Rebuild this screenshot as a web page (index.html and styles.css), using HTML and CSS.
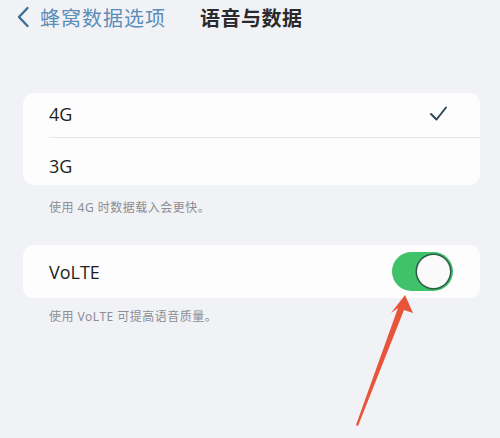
FILE: index.html
```html
<!DOCTYPE html>
<html lang="zh">
<head>
<meta charset="utf-8">
<link rel="stylesheet" href="styles.css">
</head>
<body>
<div class="screen">
  <header class="nav">
    <div class="back">
      <svg class="chev" width="14" height="22" viewBox="0 0 14 22"><path d="M11.5 2 L3 11 L11.5 20" fill="none" stroke="#3b6f96" stroke-width="2.4" stroke-linecap="round" stroke-linejoin="round"/></svg>
      <span class="back-label">蜂窝数据选项</span>
    </div>
    <h1 class="title">语音与数据</h1>
  </header>

  <section class="group first">
    <div class="card">
      <div class="row top">
        <span class="label">4G</span>
        <svg class="check" width="19" height="17" viewBox="0 0 19 17"><path d="M2 9 L7.5 14.5 L17 2.5" fill="none" stroke="#2d4b5c" stroke-width="2" stroke-linecap="round" stroke-linejoin="round"/></svg>
      </div>
      <div class="row sep">
        <span class="label">3G</span>
      </div>
    </div>
    <p class="note">使用 4G 时数据载入会更快。</p>
  </section>

  <section class="group">
    <div class="card">
      <div class="row tall">
        <span class="label">VoLTE</span>
        <div class="toggle"><div class="knob"></div></div>
      </div>
    </div>
    <p class="note last">使用 VoLTE 可提高语音质量。</p>
  </section>

  <svg class="arrow" width="500" height="438" viewBox="0 0 500 438">
    <polygon points="405,295 413,313 404,310 358,426 356,425 398,308 391,313" fill="#e8543a"/>
  </svg>
</div>
</body>
</html>
```
FILE: styles.css
```css
* { box-sizing: border-box; }
html, body { margin: 0; padding: 0; }
body {
  width: 500px;
  height: 438px;
  background: #f1f2f6;
  font-family: "Noto Sans", "Noto Sans CJK SC", sans-serif;
  overflow: hidden;
}
.screen {
  position: relative;
  width: 500px;
  height: 438px;
  padding: 0 20px 0 23px;
}
.nav {
  display: flex;
  align-items: center;
  height: 34px;
  margin-left: -7px;
}
.back {
  display: flex;
  align-items: center;
  gap: 10px;
}
.chev { display: block; }
.back-label {
  font-size: 20px;
  color: #5b8db8;
  letter-spacing: 1px;
}
.title {
  margin: 0 0 0 34px;
  font-size: 20px;
  font-weight: 700;
  color: #2a2a2e;
  letter-spacing: 0.5px;
}
.group.first { margin-top: 59px; }
.card {
  background: #fdfdfe;
  border-radius: 10px;
  padding-left: 26px;
}
.row {
  display: flex;
  align-items: center;
  justify-content: space-between;
  padding-right: 32px;
}
.row.top {
  height: 44px;
  padding-bottom: 3px;
}
.row.sep {
  border-top: 1px solid #e6e7ea;
  height: 48px;
  padding-top: 9px;
}
.row.tall {
  height: 53px;
  padding-right: 27px;
}
.label {
  font-family: "Open Sans", "Noto Sans", sans-serif;
  font-size: 18px;
  color: #1e1e22;
}
.check { display: block; }
.note {
  margin: 0;
  padding: 13px 0 0 26px;
  height: 60px;
  font-size: 12px;
  color: #8d8d93;
  letter-spacing: 0.5px;
}
.note.last { padding-top: 9px; }
.toggle {
  width: 61px;
  height: 39px;
  border-radius: 20px;
  background: #3fc26a;
  padding: 3px;
  display: flex;
  justify-content: flex-end;
}
.knob {
  width: 33px;
  height: 33px;
  border-radius: 50%;
  background: #fafafa;
  box-shadow: 0 0 0 1.5px #2e5a4a;
}
.arrow {
  position: absolute;
  left: 0;
  top: 0;
  pointer-events: none;
}
```
